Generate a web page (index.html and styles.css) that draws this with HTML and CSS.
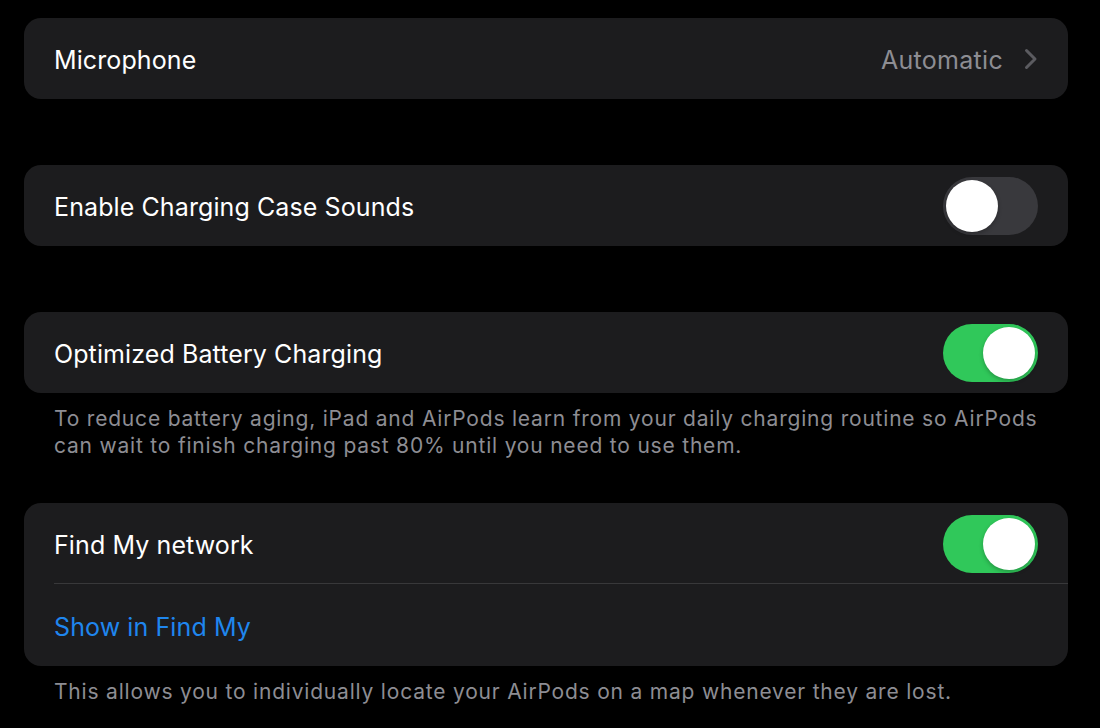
FILE: index.html
```html
<!DOCTYPE html>
<html lang="en">
<head>
<meta charset="utf-8">
<title>AirPods Settings</title>
<link rel="stylesheet" href="styles.css">
</head>
<body>
<main class="page">
  <section class="group">
    <div class="row">
      <span class="label">Microphone</span>
      <span class="value">Automatic</span>
      <svg class="chevron" width="14" height="22" viewBox="0 0 14 22"><path d="M2.5 2.5 L11 11 L2.5 19.5" fill="none" stroke="#5b5b60" stroke-width="3" stroke-linecap="round" stroke-linejoin="round"/></svg>
    </div>
  </section>

  <section class="group spaced">
    <div class="row">
      <span class="label">Enable Charging Case Sounds</span>
      <span class="toggle"><span class="knob"></span></span>
    </div>
  </section>

  <section class="group spaced">
    <div class="row">
      <span class="label">Optimized Battery Charging</span>
      <span class="toggle on"><span class="knob"></span></span>
    </div>
  </section>
  <p class="footer">To reduce battery aging, iPad and AirPods learn from your daily charging routine so AirPods can wait to finish charging past 80% until you need to use them.</p>

  <section class="group after-footer">
    <div class="row divided">
      <span class="label">Find My network</span>
      <span class="toggle on"><span class="knob"></span></span>
    </div>
    <div class="row tall">
      <span class="label link">Show in Find My</span>
    </div>
  </section>
  <p class="footer">This allows you to individually locate your AirPods on a map whenever they are lost.</p>
</main>
</body>
</html>
```
FILE: styles.css
```css
html, body {
  margin: 0;
  padding: 0;
  background: #000;
}
body {
  font-family: "Inter", "Noto Sans", sans-serif;
  color: #fff;
}
.page {
  width: 1044px;
  margin-left: 24px;
  padding-top: 18px;
}
.group {
  background: #1c1c1e;
  border-radius: 17px;
  overflow: hidden;
}
.group.spaced {
  margin-top: 66px;
}
.group.after-footer {
  margin-top: 44px;
}
.row {
  position: relative;
  height: 81px;
  display: flex;
  align-items: center;
  padding: 0 30px;
}
.row.tall {
  height: 82px;
}
.row.divided::after {
  content: "";
  position: absolute;
  left: 30px;
  right: 0;
  bottom: 0;
  height: 1px;
  background: #38383a;
}
.label {
  flex: 1;
  font-size: 25px;
  line-height: 30px;
  padding-top: 3px;
  letter-spacing: 0.1px;
  color: #fff;
}
.label.link {
  color: #1f86ee;
}
.value {
  font-size: 25px;
  line-height: 30px;
  padding-top: 3px;
  letter-spacing: 0.3px;
  color: #8d8d93;
  margin-right: 21px;
}
.chevron {
  display: block;
  margin-top: 1px;
}
.toggle {
  width: 95px;
  height: 58px;
  border-radius: 29px;
  background: #39393d;
  position: relative;
  display: flex;
  align-items: center;
  padding: 0 3px;
  box-sizing: border-box;
}
.toggle.on {
  background: #30c85a;
  justify-content: flex-end;
}
.knob {
  width: 52px;
  height: 52px;
  border-radius: 50%;
  background: #fff;
  box-shadow: 0 2px 4px rgba(0,0,0,0.25);
}
.footer {
  margin: 0;
  padding: 12px 0 0 30px;
  font-size: 21px;
  line-height: 27px;
  color: #8d8d93;
  letter-spacing: 0.8px;
}
```
